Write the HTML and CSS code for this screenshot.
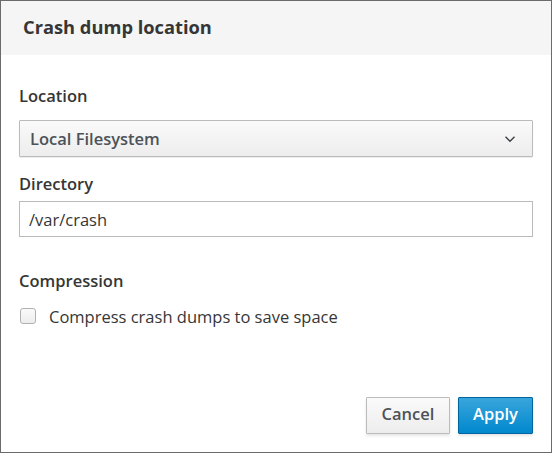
FILE: index.html
```html
<!DOCTYPE html>
<html>
<head>
<meta charset="utf-8">
<link rel="stylesheet" href="styles.css">
</head>
<body>
<div class="dialog">
  <div class="header"><h1 class="title">Crash dump location</h1></div>
  <div class="content">
    <div class="label label-first">Location</div>
    <div class="select">
      <span class="select-text">Local Filesystem</span>
      <svg class="chevron" width="12" height="8" viewBox="0 0 12 8"><path d="M1.5 1.8 L6 6.2 L10.5 1.8" fill="none" stroke="#393f44" stroke-width="1.4"/></svg>
    </div>
    <div class="label label-dir">Directory</div>
    <div class="input">/var/crash</div>
    <div class="label label-comp">Compression</div>
    <div class="check-row">
      <span class="checkbox"></span>
      <span class="check-text">Compress crash dumps to save space</span>
    </div>
  </div>
  <div class="footer">
    <button class="btn btn-default">Cancel</button>
    <button class="btn btn-primary">Apply</button>
  </div>
</div>
</body>
</html>
```
FILE: styles.css
```css
html, body {
  margin: 0;
  padding: 0;
  background: #fff;
}
body {
  font-family: "Open Sans", "Noto Sans", sans-serif;
  color: #363636;
}
.dialog {
  box-sizing: border-box;
  width: 552px;
  height: 453px;
  border: 1px solid #6b6b6b;
  display: flex;
  flex-direction: column;
}
.header {
  box-sizing: border-box;
  height: 54px;
  background: #f5f5f5;
  display: flex;
  align-items: center;
  padding: 0 0 3px 22px;
}
.title {
  margin: 0;
  font-size: 18.3px;
  font-weight: 700;
  color: #363636;
}
.content {
  padding: 30px 18px 0 18px;
  display: flex;
  flex-direction: column;
}
.label {
  font-size: 16.5px;
  font-weight: 600;
  line-height: 22px;
  color: #363636;
}
.label-first { margin-bottom: 13px; }
.label-dir { margin-top: 16px; margin-bottom: 6px; }
.label-comp { margin-top: 33px; margin-bottom: 13px; }
.select {
  box-sizing: border-box;
  height: 37px;
  border: 1px solid #bbb;
  border-radius: 1px;
  background: linear-gradient(to bottom, #fafafa, #ededed);
  box-shadow: 0 1px 1px rgba(3,3,3,0.08);
  display: flex;
  align-items: center;
  justify-content: space-between;
  padding: 0 16px 0 10px;
}
.select-text {
  font-size: 16.5px;
  font-weight: 600;
  color: #4d5258;
}
.chevron { display: block; }
.input {
  box-sizing: border-box;
  height: 36px;
  border: 1px solid #bbb;
  display: flex;
  align-items: center;
  padding-left: 9px;
  font-size: 16.5px;
  color: #363636;
}
.check-row {
  display: flex;
  align-items: center;
  height: 22px;
  padding-left: 1px;
}
.checkbox {
  box-sizing: border-box;
  width: 16px;
  height: 16px;
  border: 1px solid #b0b0b0;
  border-radius: 3px;
  background: linear-gradient(to bottom, #fafafa, #ededed);
  margin-right: 13px;
}
.check-text {
  font-size: 16.5px;
  color: #363636;
}
.footer {
  margin-top: auto;
  display: flex;
  justify-content: flex-end;
  gap: 8px;
  padding: 0 18px 18px 0;
}
.btn {
  box-sizing: border-box;
  height: 37px;
  font-family: "Open Sans", "Noto Sans", sans-serif;
  font-size: 16.5px;
  line-height: 22px;
  padding: 0 0 3px 0;
  border-radius: 1px;
  box-shadow: 0 2px 3px rgba(3,3,3,0.1);
}
.btn-default {
  width: 84px;
  border: 1px solid #bbb;
  background: linear-gradient(to bottom, #fafafa, #ededed);
  color: #4d5258;
  font-weight: 600;
}
.btn-primary {
  width: 75px;
  border: 1px solid #00659c;
  background: linear-gradient(to bottom, #39a5dc, #0088ce);
  color: #fff;
  font-weight: 600;
}
```
